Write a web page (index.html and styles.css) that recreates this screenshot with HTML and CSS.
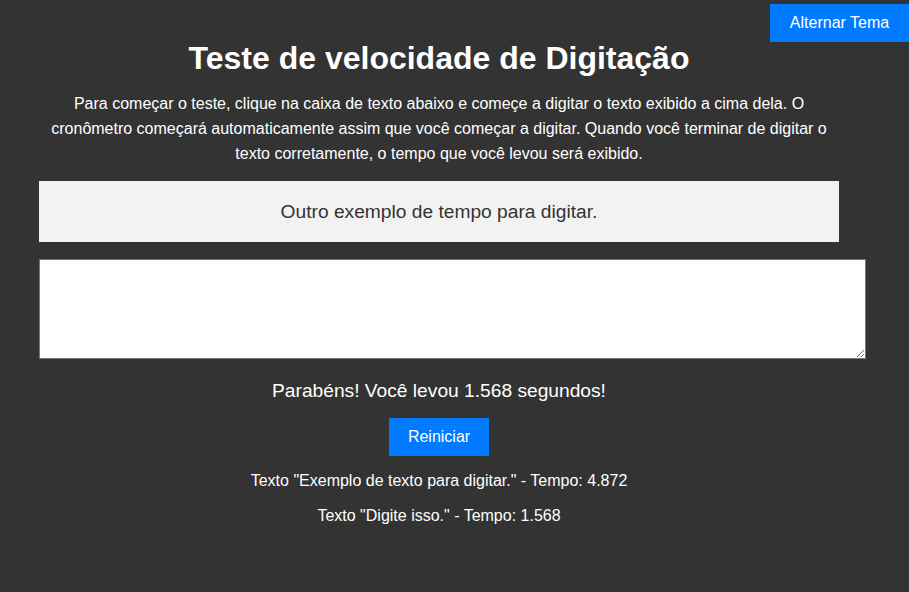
FILE: index.html
```html
<!DOCTYPE html>
<html lang="pt-BR">
<head>
<meta charset="utf-8">
<title>Teste de velocidade de Digitação</title>
<link rel="stylesheet" href="styles.css">
</head>
<body>
<button class="theme-btn">Alternar Tema</button>
<main class="container">
  <h1 class="title">Teste de velocidade de Digitação</h1>
  <p class="intro">Para começar o teste, clique na caixa de texto abaixo e começe a digitar o texto exibido a cima dela. O cronômetro começará automaticamente assim que você começar a digitar. Quando você terminar de digitar o texto corretamente, o tempo que você levou será exibido.</p>
  <div class="target">Outro exemplo de tempo para digitar.</div>
  <textarea class="input"></textarea>
  <p class="result">Parabéns! Você levou 1.568 segundos!</p>
  <div class="actions"><button class="restart">Reiniciar</button></div>
  <p class="history">Texto "Exemplo de texto para digitar." - Tempo: 4.872</p>
  <p class="history">Texto "Digite isso." - Tempo: 1.568</p>
</main>
</body>
</html>
```
FILE: styles.css
```css
html, body {
  margin: 0;
  padding: 0;
  background: #333333;
  color: #ffffff;
  font-family: "Liberation Sans", Arial, sans-serif;
}
.theme-btn {
  position: absolute;
  top: 4px;
  right: 0;
  width: 139px;
  height: 38px;
  background: #007bff;
  color: #fff;
  border: none;
  font-family: "Liberation Sans", Arial, sans-serif;
  font-size: 16px;
  padding: 0;
}
.container {
  width: 800px;
  margin-left: 39px;
  padding-top: 40px;
  text-align: center;
}
.title {
  margin: 0;
  font-size: 32px;
  line-height: 37px;
  font-weight: bold;
}
.intro {
  margin: 14px 0 0;
  font-size: 16px;
  line-height: 25px;
}
.target {
  margin-top: 15px;
  height: 61px;
  background: #f2f2f2;
  color: #333;
  font-size: 19.2px;
  display: flex;
  align-items: center;
  justify-content: center;
}
.input {
  display: block;
  box-sizing: border-box;
  width: 827px;
  height: 100px;
  margin-top: 17px;
  border: 1px solid #767676;
  background: #fff;
}
.result {
  margin: 20px 0 0;
  font-size: 19.2px;
  line-height: 24px;
}
.actions {
  margin-top: 15px;
}
.restart {
  width: 100px;
  height: 38px;
  background: #007bff;
  color: #fff;
  border: none;
  font-family: "Liberation Sans", Arial, sans-serif;
  font-size: 16px;
  padding: 0;
}
.history {
  margin: 15px 0 0;
  font-size: 16px;
  line-height: 20px;
}
```
